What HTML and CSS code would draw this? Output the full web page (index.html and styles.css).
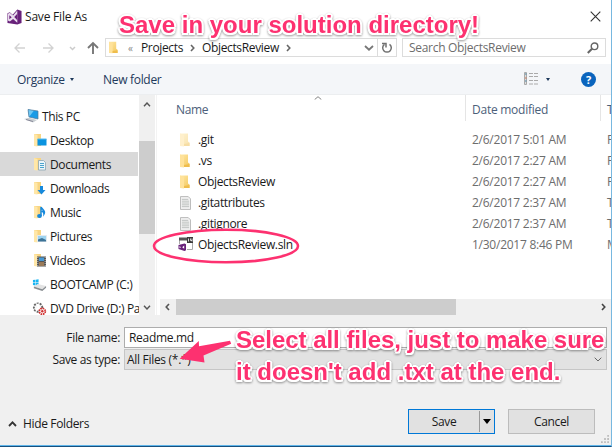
FILE: index.html
```html
<!DOCTYPE html>
<html lang="en">
<head>
<meta charset="utf-8">
<title>Save File As</title>
<link rel="stylesheet" href="styles.css">
</head>
<body>
<svg width="0" height="0" class="defs">
  <defs>
    <linearGradient id="fold" x1="0" x2="1" y1="0" y2="1"><stop offset="0" stop-color="#ffe9a8"/><stop offset="1" stop-color="#f3c75c"/></linearGradient>
    <symbol id="folder" viewBox="0 0 10 14"><path d="M0 .5h8v8l1.500 1V13H0z" fill="url(#fold)"/><path d="M0 .5l4 1.500V13.500L0 13z" fill="#ffe29a"/><path d="M4 11l5.500-1V13H4z" fill="#efbd4c"/></symbol>
    <symbol id="sidefolder" viewBox="0 0 14 14"><path d="M1 1h7v12H1z" fill="#f8d583"/><path d="M1 1l3.500 1v11.500L1 13z" fill="#ffe7a8"/></symbol>
    <symbol id="doc" viewBox="0 0 12 15"><path d="M.5.5h8.500l2.500 2.500v11.500H.5z" fill="#f3f3f3" stroke="#b5b5b5"/><path d="M2 3.500h7M2 5.500h8M2 7.500h8M2 9.500h8M2 11.500h8" stroke="#b9bdbb"/></symbol>
  </defs>
</svg>
<main class="dialog">
  <header class="titlebar">
    <svg class="logo" viewBox="0 0 16 17"><path d="M11 .5L15.500 2v13L11 16.500.5 15V4.500L3 3.500 6 6z" fill="#68217a"/><path d="M1 5l2-1 3.500 2.800L11 1.500v13l-4.500-4L3 13.200l-2-1z" fill="#e9dcee"/><path d="M2.500 6.500v4.500L5 8.700zM11 5v7L7.700 8.600z" fill="#68217a"/></svg>
    <h1>Save File As</h1>
    <svg class="close" viewBox="0 0 11 11"><path d="M.7.7l9.600 9.600M10.300.7L.7 10.300" stroke="#333" stroke-width="1.100"/></svg>
  </header>
  <nav class="address">
    <svg class="arrows" viewBox="0 0 90 14" fill="none"><path d="M11 7H1M5.500 2.500L1 7l4.500 4.500M29 7h10M34.500 2.500L39 7l-4.500 4.500" stroke="#d2d2d2" stroke-width="1.300"/><path d="M56 6l2.500 2.500L61 6" stroke="#ccc" stroke-width="1.500"/><path d="M79 13V2M74 7l5-5 5 5" stroke="#777" stroke-width="1.900"/></svg>
    <div class="crumbs">
      <svg class="cfolder"><use href="#folder"/></svg>
      <span class="laquo">«</span>
      <span class="c1">Projects</span>
      <svg class="chev" viewBox="0 0 5 8"><path d="M1 1l2.800 3L1 7" fill="none" stroke="#666" stroke-width="1.600"/></svg>
      <span class="c2">ObjectsReview</span>
      <svg class="chev" viewBox="0 0 5 8"><path d="M1 1l2.800 3L1 7" fill="none" stroke="#666" stroke-width="1.600"/></svg>
      <svg class="down" viewBox="0 0 10 6"><path d="M1 1l4 3.700L9 1" fill="none" stroke="#777" stroke-width="1.800"/></svg>
      <span class="refresh"><svg viewBox="0 0 12 12"><path d="M8.500 2.300A4.300 4.300 0 1 1 3.500 2.300" fill="none" stroke="#707070" stroke-width="1.500"/><path d="M1 1.500h4v4" fill="none" stroke="#707070" stroke-width="1.500"/></svg></span>
    </div>
    <div class="search"><span>Search ObjectsReview</span><svg viewBox="0 0 12 12"><circle cx="7.500" cy="4.300" r="3.300" fill="none" stroke="#666" stroke-width="1.400"/><path d="M5 6.700L.8 11" stroke="#666" stroke-width="2"/></svg></div>
  </nav>
  <div class="toolbar">
    <span class="organize">Organize</span><i class="tri"></i>
    <span class="newf">New folder</span>
    <svg class="view" viewBox="0 0 14 14"><path d="M.5.5h2v12h-2z" fill="#ddd" stroke="#aaa"/><path d="M5 1.500h4M10 1.500h4M5 4.500h4M10 4.500h4M5 8.500h4M10 8.500h4M5 12h4M10 12h4" stroke="#aaa"/><path d="M1 2h1.500M1 9h1.500" stroke="#4a86a8"/><path d="M1 6h1.500" stroke="#d07050"/></svg>
    <i class="tri t2"></i>
    <span class="help">?</span>
  </div>
  <section class="browser">
    <aside>
      <ul class="tree">
        <li class="root"><svg viewBox="0 0 16 16"><path d="M4 1.500l10 1.500v8L5 9z" fill="#1a9be6"/><path d="M4 1.500l6 1L5 9z" fill="#6fc9f5"/><path d="M4 1.500l10 1.500v8L5 9z" fill="none" stroke="#52799a" stroke-width=".7"/><path d="M0 11l5-1.200 8 2.200-4 2.500z" fill="#c8ced2"/><path d="M2 11.500l7 2" stroke="#889"/></svg><span>This PC</span></li>
        <li><svg viewBox="0 0 14 14"><use href="#sidefolder"/><path d="M4.500 6h9v6.500h-9z" fill="#0a93e0"/><path d="M4.500 6h9" stroke="#57bdf0"/></svg><span>Desktop</span></li>
        <li class="sel"><svg viewBox="0 0 14 14"><use href="#sidefolder"/><path d="M5.500 3.500h5l2 2v7.500h-7z" fill="#eaf5fa" stroke="#8aa5b2" stroke-width=".8"/><path d="M7 6.500h4M7 8.500h4M7 10.500h4" stroke="#4ba3cc"/></svg><span>Documents</span></li>
        <li><svg viewBox="0 0 14 14"><use href="#sidefolder"/><path d="M7 5h3v4h2.500L8.500 13.500 4.500 9H7z" fill="#1689dc"/></svg><span>Downloads</span></li>
        <li><svg viewBox="0 0 14 14"><use href="#sidefolder"/><path d="M8 11V2c1 2.500 5 3.500 3 7 0-2-1-2.500-2-3" stroke="#1689dc" stroke-width="1.500" fill="none"/><ellipse cx="6.500" cy="11" rx="2.400" ry="1.900" fill="#1689dc"/></svg><span>Music</span></li>
        <li><svg viewBox="0 0 14 14"><use href="#sidefolder"/><path d="M4.500 6.500h9v6h-9z" fill="#9dd3f0" stroke="#e4eaee"/><path d="M5 10.500l4-1.500 4 2v1.500H5z" fill="#3c7397"/></svg><span>Pictures</span></li>
        <li><svg viewBox="0 0 14 14"><use href="#sidefolder"/><path d="M4 3.500h9v10H4z" fill="#555"/><path d="M6 4.500h5v3.500H6z" fill="#4698d4"/><path d="M6 9h5v4H6z" fill="#9a7a58"/><path d="M4.800 4v9M12.200 4v9" stroke="#ddd" stroke-dasharray="1 1" stroke-width=".8"/></svg><span>Videos</span></li>
        <li class="drive"><svg viewBox="0 0 16 14"><path d="M1 2.300l2.500-.4v2.800H1zM4 1.800L7 1.300v3.400H4zM1 5.200h2.500V8L1 7.600zM4 5.200h3v3.300L4 8z" fill="#18b4f1"/><path d="M2 9l4-2.500 9 2-4 3.500z" fill="#e3e3e3"/><path d="M2 9l9 3 4-3.500v2L11 14 2 11z" fill="#888d91"/></svg><span>BOOTCAMP (C:)</span></li>
        <li class="drive"><svg viewBox="0 0 16 16"><circle cx="6.500" cy="7" r="4.500" fill="#f7f7f7" stroke="#666" stroke-width="2" stroke-dasharray="2 1.200"/><path d="M6 3l1 4-3 3" fill="none" stroke="#fff" stroke-width="2"/><circle cx="11" cy="11" r="3.200" fill="#fff" stroke="#cf2f2f" stroke-width="1.900" stroke-dasharray="1.700 .8"/><circle cx="11" cy="11" r="1.300" fill="#cf2f2f"/></svg><span>DVD Drive (D:) Pa</span></li>
      </ul>
      <div class="vbar"><svg viewBox="0 0 8 5"><path d="M1 4.300L4 1l3 3.300" fill="none" stroke="#555" stroke-width="1.400"/></svg><div class="vthumb"></div><svg viewBox="0 0 8 5"><path d="M1 .7L4 4 7 .7" fill="none" stroke="#555" stroke-width="1.400"/></svg></div>
    </aside>
    <div class="files">
      <div class="row head"><span class="name">Name</span><span class="date">Date modified</span><span class="type">T</span></div>
      <svg class="sort" viewBox="0 0 8 4"><path d="M.7 3.500L4 .7l3.300 2.800" fill="none" stroke="#777" stroke-width=".9"/></svg>
      <div class="row"><svg class="fi dim"><use href="#folder"/></svg><span class="name">.git</span><span class="date">2/6/2017 5:01 AM</span><span class="type">F</span></div>
      <div class="row"><svg class="fi"><use href="#folder"/></svg><span class="name">.vs</span><span class="date">2/6/2017 2:27 AM</span><span class="type">F</span></div>
      <div class="row"><svg class="fi"><use href="#folder"/></svg><span class="name">ObjectsReview</span><span class="date">2/6/2017 2:27 AM</span><span class="type">F</span></div>
      <div class="row"><svg class="fd"><use href="#doc"/></svg><span class="name">.gitattributes</span><span class="date">2/6/2017 2:37 AM</span><span class="type">T</span></div>
      <div class="row"><svg class="fd"><use href="#doc"/></svg><span class="name">.gitignore</span><span class="date">2/6/2017 2:37 AM</span><span class="type">T</span></div>
      <div class="row"><svg class="fs" viewBox="0 0 15 15"><path d="M1.500 7V1.500h13v11H9" fill="#fff" stroke="#aaa"/><path d="M1 .5h9v3H1z" fill="#555"/><path d="M9 0h6v6H9z" fill="#3a3a3a"/><path d="M10.500 1.500v3M12.500 1.500v2h1.500M14 1.500v3" stroke="#fff" stroke-width=".8"/><path d="M6.500 6.500L8 7.200v6l-1.500.8L.5 12V8z" fill="#68217a"/><path d="M1.500 9v2.300L3 10.200zM6.200 8.600v3.200L4.200 10.200z" fill="#fff"/></svg><span class="name">ObjectsReview.sln</span><span class="date">1/30/2017 8:46 PM</span><span class="type">M</span></div>
      <div class="hbar"><svg viewBox="0 0 5 8"><path d="M4 1L1.200 4 4 7" fill="none" stroke="#555" stroke-width="1.600"/></svg><div class="hthumb"></div><svg class="hr" viewBox="0 0 5 8"><path d="M1 1l2.800 3L1 7" fill="none" stroke="#444" stroke-width="1.600"/></svg></div>
    </div>
  </section>
  <footer>
    <div class="field"><label>File name:</label><div class="input">Readme.md</div></div>
    <div class="field"><label>Save as type:</label><div class="input select"><span>All Files (*.*)</span><svg viewBox="0 0 8 5"><path d="M.7.7L4 4 7.300.7" fill="none" stroke="#666"/></svg></div></div>
    <div class="actions">
      <svg class="hide" viewBox="0 0 9 6"><path d="M1 5l3.500-3.600L8 5" fill="none" stroke="#333" stroke-width="1.800"/></svg><span class="hidet">Hide Folders</span>
      <div class="save"><span>Save</span><b><i></i></b></div>
      <div class="cancel">Cancel</div>
    </div>
  </footer>
</main>
<svg class="grip" viewBox="0 0 9 9"><path d="M7 0h2v2H7zM7 3.500h2v2H7zM7 7h2v2H7zM3.500 3.500h2v2h-2zM3.500 7h2v2h-2zM0 7h2v2H0z" fill="#bdbdbd"/></svg>
<div class="note n1">Save in your solution directory!</div>
<div class="note n2">Select all files, just to make sure</div>
<div class="note n3">it doesn't add .txt at the end.</div>
<svg class="marks" viewBox="0 0 612 447"><ellipse cx="226" cy="246" rx="72" ry="16.300" fill="none" stroke="#fd3170" stroke-width="2.600"/><path d="M179.700 358.700L198.800 341l.2 5.300 31-5.600 1.200 3L203.500 355.500l1 7z" fill="#fd3170"/></svg>
</body>
</html>
```
FILE: styles.css
```css
* { box-sizing: border-box; }
body {
  margin: 0; width: 612px; height: 447px; overflow: hidden; position: relative;
  font: 12px/16px "Open Sans", "Noto Sans", sans-serif; letter-spacing: -.35px; color: #1a1a1a;
  background: #fff; white-space: nowrap;
}
svg { display: block; flex: none; }
.defs { position: absolute; }
.dialog { display: flex; flex-direction: column; width: 612px; height: 447px; border-right: 1px solid #78b8e0; border-bottom: 1px solid #17507e; }
.titlebar { display: flex; height: 38px; padding: 9px 10px 0 7px; }
.titlebar h1 { margin: 0; font-size: 12px; font-weight: 400; flex: 1; padding-left: 3px; letter-spacing: -.2px; }
.logo { width: 15px; height: 16px; }
.close { width: 11px; height: 11px; margin-top: 2px; }
.address { display: flex; height: 26px; padding-left: 14px; }
.arrows { width: 90px; height: 14px; margin-top: 3px; margin-right: 1px; }
.crumbs, .search { display: flex; align-items: center; border: 1px solid #dcdcdc; height: 19px; }
.crumbs { width: 292px; padding-left: 3px; }
.crumbs > span:not(.refresh), .search span { padding-top: 1px; }
.cfolder { width: 9px; height: 13px; }
.laquo { color: #888; font-size: 10px; width: 23px; padding-left: 10px; }
.c1 { width: 49px; }
.c2 { width: 84px; }
.chev { width: 5px; height: 8px; }
.chev:nth-of-type(2) { margin-right: 7px; }
.down { width: 10px; height: 6px; margin-left: auto; margin-right: 3px; }
.refresh { width: 19px; height: 17px; border-left: 1px solid #dcdcdc; display: grid; place-items: center; }
.refresh svg { width: 12px; height: 12px; }
.search { width: 204px; margin-left: 5px; padding: 0 6px 0 6px; justify-content: space-between; color: #6d6d6d; letter-spacing: -.3px; }
.search svg { width: 12px; height: 12px; }
.toolbar { display: flex; align-items: center; height: 31px; background: #f4f6f9; color: #1e395b; padding-left: 17px; border-bottom: 1px solid #eceef0; letter-spacing: -.3px; }
.organize { width: 53px; padding-top: 2px; }
.tri { border: 2.500px solid transparent; border-top: 3px solid #1e395b; border-bottom: 0; }
.newf { margin-left: 29px; width: 421px; padding-top: 2px; }
.view { width: 14px; height: 14px; }
.t2 { margin-left: 8px; }
.help { width: 15px; height: 15px; border-radius: 50%; background: #0a64bd; color: #fff; font-weight: 700; font-size: 11px; line-height: 15px; text-align: center; margin-left: auto; margin-right: 15px; }
.browser { display: flex; height: 220px; }
aside { display: flex; width: 157px; border-right: 1px solid #f3f3f3; padding-right: 1px; }
.tree { list-style: none; margin: 0; padding: 9px 0 0; width: 139px; overflow: hidden; }
.tree li { display: flex; align-items: center; height: 24px; padding-left: 33px; }
.tree span { padding-top: 2px; }
.tree svg { width: 14px; height: 14px; margin-right: 3px; }
.tree .root { padding-left: 24px; letter-spacing: -.4px; }
.tree .root svg { width: 16px; height: 16px; margin-right: 2px; }
.tree .drive { padding-left: 32px; }
.tree .drive svg { width: 15px; height: 15px; }
.tree .sel { background: #d9d9d9; width: 138px; }
.vbar { width: 16px; background: #f0f0f0; display: flex; flex-direction: column; align-items: center; padding: 7px 0 5px; }
.vbar svg { width: 8px; height: 5px; }
.vthumb { width: 16px; height: 93px; margin-top: 34px; margin-bottom: auto; background: #cdcdcd; }
.files { width: 454px; padding-left: 3px; overflow: hidden; position: relative; display: flex; flex-direction: column; }
.row { display: flex; align-items: center; height: 21px; padding-left: 20px; flex: none; }
.head { height: 26px; margin-bottom: 8px; padding: 3px 0 0 16px; }
.head .name { width: 289px; }
.head .date, .head .type { border-left: 1px solid #e5e5e5; height: 26px; margin-top: -3px; padding: 7px 0 0 6px; }
.head .date { width: 135px; }
.sort { position: absolute; left: 157px; top: 1px; width: 8px; height: 4px; }
.fi { width: 10px; height: 14px; margin-right: 8px; }
.dim { opacity: .5; }
.fd { width: 11px; height: 14px; margin-right: 7px; }
.fs { width: 15px; height: 15px; margin-left: -2px; margin-right: 5px; }
.name { width: 274px; flex: none; }
.date { width: 135px; flex: none; color: #6d6d6d; letter-spacing: -.25px; }
.type { color: #6d6d6d; }
.head span { color: #4c607a; }
.hbar { display: flex; align-items: center; height: 16px; margin-top: auto; background: #f0f0f0; padding-left: 5px; }
.hbar svg { width: 5px; height: 8px; }
.hthumb { width: 280px; height: 16px; margin-left: 6px; background: #cdcdcd; }
.hbar .hr { margin-left: 145px; }
footer { flex: 1; background: #f0f0f0; border-bottom: 1px solid #5fb5ea; padding-top: 11px; }
.field { display: flex; align-items: center; height: 22px; }
label { width: 120px; text-align: right; margin-right: 4px; padding-top: 1px; }
.input { width: 483px; height: 21px; background: #fff; border: 1px solid #adadad; padding: 2px 4px; line-height: 16px; letter-spacing: -.3px; }
.select { background: #e2e2e2; border-color: #c6c6c6; padding: 3px 4px 2px 2px; display: flex; justify-content: space-between; align-items: center; }
.select svg { width: 8px; height: 5px; }
.actions { display: flex; align-items: center; height: 26px; margin-top: 38px; }
.hide { width: 9px; height: 6px; margin: 6px 6px 0 8px; }
.hidet { width: 385px; margin-top: 6px; }
.save { display: flex; width: 87px; height: 25px; border: 1px solid #0078d7; background: #e1e1e1; line-height: 24px; text-align: center; }
.save span { flex: 1; }
.save b { width: 15px; border-left: 1px solid #999; display: grid; place-items: center; margin: 1px 0; }
.save i { border: 4px solid transparent; border-top: 5px solid #000; border-bottom: 0; }
.cancel { width: 87px; height: 25px; margin-left: 13px; border: 1px solid #bcbcbc; background: #e1e1e1; line-height: 24px; text-align: center; }
.grip { position: absolute; left: 601px; top: 435px; width: 8px; height: 8px; }
.note {
  position: absolute; font: bold 24px/28px "Liberation Sans", Arial, sans-serif; letter-spacing: 0; color: #fd3170;
  text-shadow: 2px 0 #fff, -2px 0 #fff, 0 2px #fff, 0 -2px #fff, 1.500px 1.500px #fff, -1.500px 1.500px #fff, 1.500px -1.500px #fff, -1.500px -1.500px #fff;
  filter: drop-shadow(0 1.500px 1px rgba(0, 0, 0, .4));
}
.n1 { left: 119px; top: 11px; }
.n2 { left: 236px; top: 326px; letter-spacing: -.03px; }
.n3 { left: 236px; top: 358px; }
.marks { position: absolute; left: 0; top: 0; width: 612px; height: 447px; }
```
